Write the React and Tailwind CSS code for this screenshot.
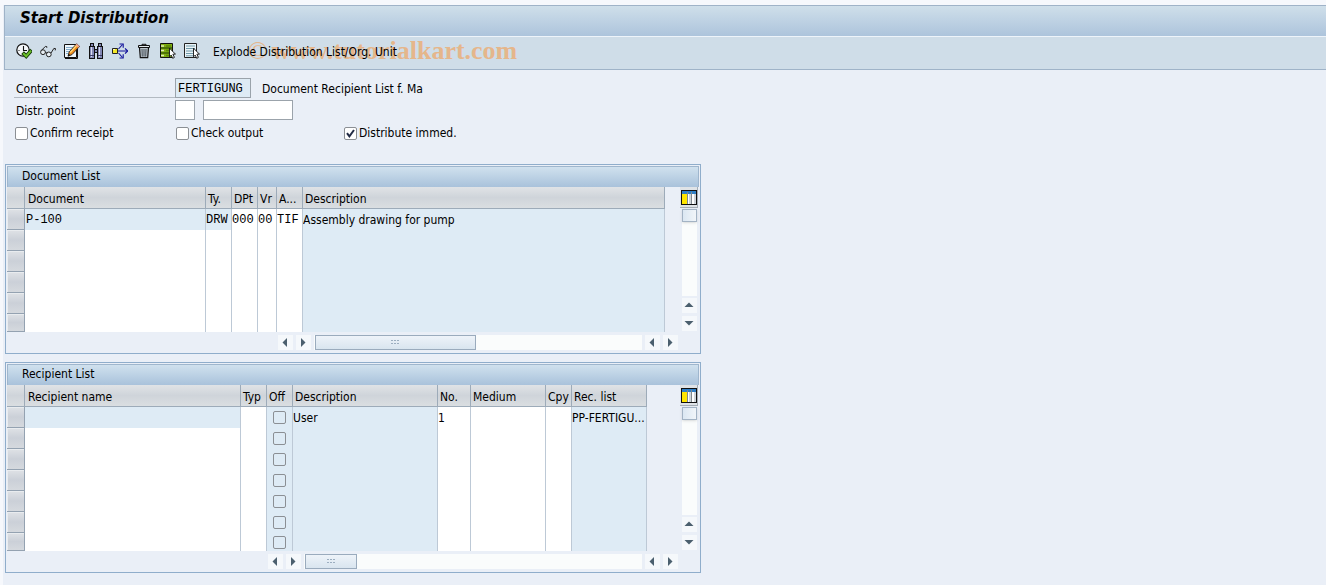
import React from "react";

const docColumns = [
  { label: "Document", width: 181, keyField: true },
  { label: "Ty.", width: 26, keyField: true },
  { label: "DPt", width: 26 },
  { label: "Vr", width: 19 },
  { label: "A...", width: 26 },
  { label: "Description", width: 362, readOnly: true, sans: true },
];

const docRows = [
  ["P-100", "DRW", "000", "00", "TIF", "Assembly drawing for pump"],
  [], [], [], [], [],
];

const recipientColumns = [
  { label: "Recipient name", width: 216, keyField: true },
  { label: "Typ", width: 26 },
  { label: "Off", width: 26, readOnly: true, checkbox: true },
  { label: "Description", width: 145, readOnly: true, sans: true },
  { label: "No.", width: 33, sans: true },
  { label: "Medium", width: 75 },
  { label: "Cpy", width: 26 },
  { label: "Rec. list", width: 75, readOnly: true, sans: true },
];

const recipientRows = [
  ["", "", "", "User", "1", "", "", "PP-FERTIGU..."],
  [], [], [], [], [], [],
];

const ExecuteIcon = () => (
  <svg width="16" height="16" viewBox="0 0 16 16" fill="none">
    <circle cx="7" cy="7" r="6.2" fill="#f4f7fa" stroke="#111" strokeWidth="1.2" />
    <path d="M7.5 3v4.5H11" stroke="#111" strokeWidth="1.1" />
    <path d="M2.5 7.5h1M7.5 11v1" stroke="#111" />
    <path d="M6.6 9.6l3.6 3.6L15.6 7" stroke="#173d08" strokeWidth="3.8" />
    <path d="M7.2 10.2l3 3 4.8-5.6" stroke="#6cc02a" strokeWidth="2" />
  </svg>
);

const GlassesIcon = () => (
  <svg width="16" height="16" viewBox="0 0 16 16" fill="none" stroke="#222">
    <circle cx="3" cy="9.2" r="2.4" fill="#e8eff4" />
    <circle cx="8.8" cy="11.4" r="2.4" fill="#e8eff4" />
    <path d="M5.2 9.8c.6-.8 1.4-.4 1.6.4M1.2 7.6L5.4 3.4l1.4.2v1.2M11 10L13.9 5.4l1.6.2-.3 1.8" />
  </svg>
);

const EditIcon = () => (
  <svg width="16" height="16" viewBox="0 0 16 16" fill="none">
    <path d="M.5 1.5h12v13H.5z" fill="#eef6fb" stroke="#111" />
    <path d="M13.5 6v9.5H1" stroke="#111" />
    <path d="M2 4.5h8M2 6.5h6M2 8.5h4M2 10.5h2" stroke="#86aecb" />
    <path d="M4 13.2l1.2-4.4L12.6.8l3 2.6-7.6 8.2z" fill="#f08c1a" stroke="#222" strokeWidth=".9" />
    <path d="M6.2 9.5L12.8 2.3" stroke="#ffd877" strokeWidth="1.4" />
    <path d="M11.6 2L12.8.8l2.7 2.5-1.2 1.4z" fill="#f3a78e" />
    <path d="M4 13.2l.7-2.4 1.7 1.5z" fill="#111" />
  </svg>
);

const FindIcon = () => (
  <svg width="16" height="16" viewBox="0 0 16 16" shapeRendering="crispEdges">
    <path d="M2 0h4v3h1v3h2V3h1V0h4v3h1v13h-6v-6H7v6H1V3h1z" fill="#111" />
    <path d="M3 1h2v2H3zM11 1h2v2h-2zM2 4h4v11H2zM10 4h4v11h-4zM7 7h2v2H7z" fill="#8388b4" />
    <path d="M3 4h1v10H3zM11 4h1v10h-1z" fill="#dadcf0" />
    <path d="M2 12h4v1H2zM10 12h4v1h-4z" fill="#3b3e66" />
  </svg>
);

const DistributeIcon = () => (
  <svg width="16" height="16" viewBox="0 0 16 16" fill="none">
    <path d="M6 8h9.5M6.5 6l4-4.5M6.5 10l4 4.5" stroke="#10109a" strokeWidth="1.1" />
    <path d="M13 5.3L15.6 8 13 10.7M7.5 1h3.7v3.7M7.5 15h3.7v-3.7" stroke="#10109a" strokeWidth="1.1" />
    <path d="M.5 5.5h5v5h-5z" fill="#f3e829" stroke="#222" />
    <path d="M1 6.5h2" stroke="#fffbc0" />
  </svg>
);

const TrashIcon = () => (
  <svg width="16" height="16" viewBox="0 0 16 16" fill="none" stroke="#111">
    <path d="M3.5 4.5h9l-.8 10.2H4.3z" fill="#b9c2ca" strokeWidth="1.2" />
    <path d="M2.5 2.5h11v2h-11zM6 2.5v-1.2h4v1.2" fill="#e4e9ed" />
    <path d="M6 6l.3 7.5M8 6v7.5M10 6l-.3 7.5" stroke="#4b545c" />
  </svg>
);

const Cursor = () => (
  <path
    d="M9.5 5.2l6 6h-2.6l1.5 3.2-1.7.9-1.5-3.2-1.7 1.7z"
    fill="#fff"
    stroke="#111"
    strokeWidth=".9"
  />
);

const SelectAllIcon = () => (
  <svg width="16" height="16" viewBox="0 0 16 16" fill="none">
    <path d="M.5.5h12v14H.5z" fill="#7fae12" stroke="#111" />
    <path d="M1 5h11M1 10h11" stroke="#1e3a05" strokeWidth="1.2" />
    <path d="M1 3h3M1 7.5h3M1 12.5h3" stroke="#e2efb8" strokeWidth="1.4" />
    <path d="M6 3h5M6 7.5h3M6 12.5h3" stroke="#5b8a08" strokeWidth="1.4" />
    <Cursor />
  </svg>
);

const DeselectAllIcon = () => (
  <svg width="16" height="16" viewBox="0 0 16 16" fill="none">
    <path d="M.5.5h12v14H.5z" fill="#eaf3f7" stroke="#222" />
    <path d="M2 3h9M2 5.5h9M2 8h8M2 10.5h7M2 12.8h7" stroke="#6e98a8" />
    <Cursor />
  </svg>
);

const LayoutIcon = () => (
  <svg width="16" height="16" viewBox="0 0 16 16" shapeRendering="crispEdges">
    <path d="M0 1h16v15H0z" fill="#111" />
    <path d="M1 2h14v13H1z" fill="#fff" />
    <path d="M1 2h14v3H1z" fill="#2f7fc6" />
    <path d="M1 5h5v10H1z" fill="#ffe600" />
    <path d="M8 5h2v10H8zM13 5h2v10h-2z" fill="#cfd5da" />
    <path d="M6 3h1v12H6zM10 3h1v12h-1z" fill="#80898f" />
  </svg>
);

const arrows = {
  up: "M2.5 9L7 4.5 11.5 9z",
  down: "M2.5 5L7 9.5 11.5 5z",
  left: "M9 3L4.5 7.5 9 12z",
  right: "M5 3L9.5 7.5 5 12z",
};

const ArrowButton = ({ direction }) => (
  <button
    aria-label={`Scroll ${direction}`}
    className="flex h-[15px] w-[15px] shrink-0 items-center justify-center bg-[#f5f8fb]"
  >
    <svg width="15" height="15" viewBox="0 0 15 15">
      <path d={arrows[direction]} fill="#4b5f6e" />
    </svg>
  </button>
);

const ToolButton = ({ label, children }) => (
  <button aria-label={label} title={label} className="flex h-4 w-4 items-center justify-center">
    {children}
  </button>
);

const CheckMark = () => (
  <svg
    className="pointer-events-none absolute inset-0 hidden peer-checked:block"
    width="13"
    height="13"
    viewBox="0 0 13 13"
  >
    <path d="M3 6.2l2.4 3.2L10 3" fill="none" stroke="#222b45" strokeWidth="2" />
  </svg>
);

const Checkbox = ({ label, checked }) => (
  <label className="flex items-center gap-0.5">
    <span className="relative h-[13px] w-[13px]">
      <input
        type="checkbox"
        defaultChecked={checked}
        className="peer block h-[13px] w-[13px] appearance-none rounded-xs border border-[#8b8f94] bg-white"
      />
      <CheckMark />
    </span>
    {label}
  </label>
);

const HeaderCell = ({ children }) => (
  <th
    scope="col"
    className="h-[22px] overflow-hidden border-r border-b border-[#9dabb9] bg-linear-to-b from-[#e0e3e6] via-[#cfd4da] to-[#dadee1] pt-0.5 pr-0 pb-0 pl-[2px] text-left font-normal whitespace-nowrap first-of-type:pl-0 [&:nth-child(2)]:pl-[3px]"
  >
    {children}
  </th>
);

const DataCell = ({ column, value, first }) => {
  const blue = column.readOnly || (first && column.keyField);
  return (
    <td
      className={`overflow-hidden border-r border-[#bdc9d6] p-0 whitespace-nowrap [&:nth-child(2)]:pl-px ${
        blue ? "bg-[#deebf5]" : "bg-white"
      } ${column.sans ? "" : "font-['Courier_New','Liberation_Mono',monospace]"}`}
    >
      {column.checkbox ? (
        <input
          type="checkbox"
          disabled
          aria-label={column.label}
          className="mx-auto block h-[13px] w-[13px] appearance-none rounded-xs border border-[#8b8f94] bg-[#deebf5]"
        />
      ) : (
        value
      )}
    </td>
  );
};

const TableControl = ({ title, columns, rows, hscroll }) => {
  const width = columns.reduce((sum, c) => sum + c.width, 18);
  return (
    <section className="w-full max-w-[696px] border border-[#8fadcb] p-px">
      <h2 className="flex h-[21px] items-center border border-b-0 border-[#9fb6cd] bg-linear-to-b from-[#d0e1ee] to-[#a9c2db] pb-0.5 pl-3.5">
        {title}
      </h2>
      <div className="flex justify-between">
        <table className="table-fixed border-separate border-spacing-0" style={{ width }}>
          <colgroup>
            <col className="w-[18px]" />
            {columns.map((c) => (
              <col key={c.label} style={{ width: c.width }} />
            ))}
          </colgroup>
          <thead>
            <tr>
              <HeaderCell />
              {columns.map((c) => (
                <HeaderCell key={c.label}>{c.label}</HeaderCell>
              ))}
            </tr>
          </thead>
          <tbody>
            {rows.map((row, i) => (
              <tr key={i} className="h-[21px] last:h-[18px]">
                <td className="h-[inherit] p-0">
                  <button
                    aria-label={`Select row ${i + 1}`}
                    className="block h-full w-full border-r border-b border-[#94a2b1] bg-linear-to-b from-[#dfe2e6] via-[#cbd0d8] to-[#d5d9de] shadow-[inset_1px_1px_0_#e9ecef]"
                  />
                </td>
                {columns.map((c, n) => (
                  <DataCell key={c.label} column={c} value={row[n]} first={i === 0} />
                ))}
              </tr>
            ))}
          </tbody>
        </table>
        <div className="mr-px flex w-[18px] shrink-0 flex-col items-center">
          <button
            aria-label="Table settings"
            className="flex h-[21px] w-[18px] items-center justify-center border-r border-b border-[#a5adb5] bg-[#dfe3e7]"
          >
            <LayoutIcon />
          </button>
          <div className="mt-px mb-0.5 w-[15px] grow bg-[#fafcfc]">
            <div className="h-[13px] border border-[#a3b3c4] bg-linear-to-r from-[#dbe7f2] to-[#f1f5f9] shadow-sm" />
          </div>
          <ArrowButton direction="up" />
          <div className="h-[3px]" />
          <ArrowButton direction="down" />
          <div className="h-px" />
        </div>
      </div>
      <div className={`flex h-5 items-center gap-[3px] pr-[21px] ${hscroll.indent}`}>
        <ArrowButton direction="left" />
        <ArrowButton direction="right" />
        <div className="h-[15px] grow bg-[#fafcfc] pl-px">
          <div
            className={`flex h-full items-center justify-center border border-[#9aabbd] bg-linear-to-b from-[#eef3f9] to-[#d9e5ef] ${hscroll.thumb}`}
          >
            <svg width="9" height="6" viewBox="0 0 9 6" fill="#9caec0" shapeRendering="crispEdges">
              <path d="M0 1h2v1H0zM3 1h2v1H3zM6 1h2v1H6zM0 4h2v1H0zM3 4h2v1H3zM6 4h2v1H6z" />
            </svg>
          </div>
        </div>
        <ArrowButton direction="left" />
        <ArrowButton direction="right" />
      </div>
    </section>
  );
};

const App = () => {
  return (
    <div className="min-h-screen bg-[#f6f8fc] pt-[5px] pl-[3px] font-['DejaVu_Sans_Condensed','DejaVu_Sans',sans-serif] text-xs text-black">
      <div className="min-h-[580px] bg-[#eaeff7]">
        <header className="ml-px border border-r-0 border-[#9fb3c8]">
          <h1 className="flex h-[31px] items-center border-b border-[#eef4fa] bg-linear-to-b from-[#cfdfea] to-[#adc4dc] pb-1 pl-[15px] font-['DejaVu_Sans',sans-serif] text-[15px] font-bold italic">
            Start Distribution
          </h1>
          <div className="relative flex h-8 items-center gap-2 bg-[#cfdde8] pb-1 pl-[11px]">
            <ToolButton label="Execute"><ExecuteIcon /></ToolButton>
            <ToolButton label="Display"><GlassesIcon /></ToolButton>
            <ToolButton label="Change"><EditIcon /></ToolButton>
            <ToolButton label="Find"><FindIcon /></ToolButton>
            <ToolButton label="Distribute"><DistributeIcon /></ToolButton>
            <ToolButton label="Delete"><TrashIcon /></ToolButton>
            <ToolButton label="Select all"><SelectAllIcon /></ToolButton>
            <ToolButton label="Deselect all"><DeselectAllIcon /></ToolButton>
            <span className="pointer-events-none absolute left-[243px] flex gap-1 font-['Liberation_Serif',serif] text-[26px] leading-8 text-[#e5b68b]">
              <span>©</span>
              <b>www.tutorialkart.com</b>
            </span>
            <button className="relative ml-[5px] pt-0.5">Explode Distribution List/Org. Unit</button>
          </div>
        </header>

        <form className="flex flex-col pt-2 pl-[11px]">
          <div className="flex h-[22px] items-start">
            <label htmlFor="context" className="h-5 w-[161px] border-b border-[#b3bac2] pl-0.5 leading-[22px]">
              Context
            </label>
            <input
              id="context"
              readOnly
              defaultValue="FERTIGUNG"
              className="h-5 w-[76px] border border-[#9ba3ab] bg-[#deebf5] px-0.5 pt-0.5 font-['Courier_New','Liberation_Mono',monospace]"
            />
            <span className="ml-[11px] leading-[22px]">Document Recipient List f. Ma</span>
          </div>
          <div className="flex h-[22px] items-start">
            <label htmlFor="point" className="w-[161px] pl-0.5 leading-[22px]">
              Distr. point
            </label>
            <input id="point" className="h-5 w-5 border border-[#9ba3ab] bg-white px-0.5" />
            <input
              aria-label="Distribution point name"
              className="ml-2 h-5 w-[90px] border border-[#9ba3ab] bg-white px-0.5"
            />
          </div>
          <div className="grid h-[22px] grid-cols-[161px_168px_auto] items-center pl-px">
            <Checkbox label="Confirm receipt" />
            <Checkbox label="Check output" />
            <Checkbox label="Distribute immed." checked />
          </div>
        </form>

        <main className="flex flex-col gap-2 pt-5 pl-0.5">
          <TableControl
            title="Document List"
            columns={docColumns}
            rows={docRows}
            hscroll={{ indent: "pl-[271px]", thumb: "w-[161px]" }}
          />
          <TableControl
            title="Recipient List"
            columns={recipientColumns}
            rows={recipientRows}
            hscroll={{ indent: "pl-[261px]", thumb: "w-[52px]" }}
          />
        </main>
      </div>
    </div>
  );
};

export default App;
